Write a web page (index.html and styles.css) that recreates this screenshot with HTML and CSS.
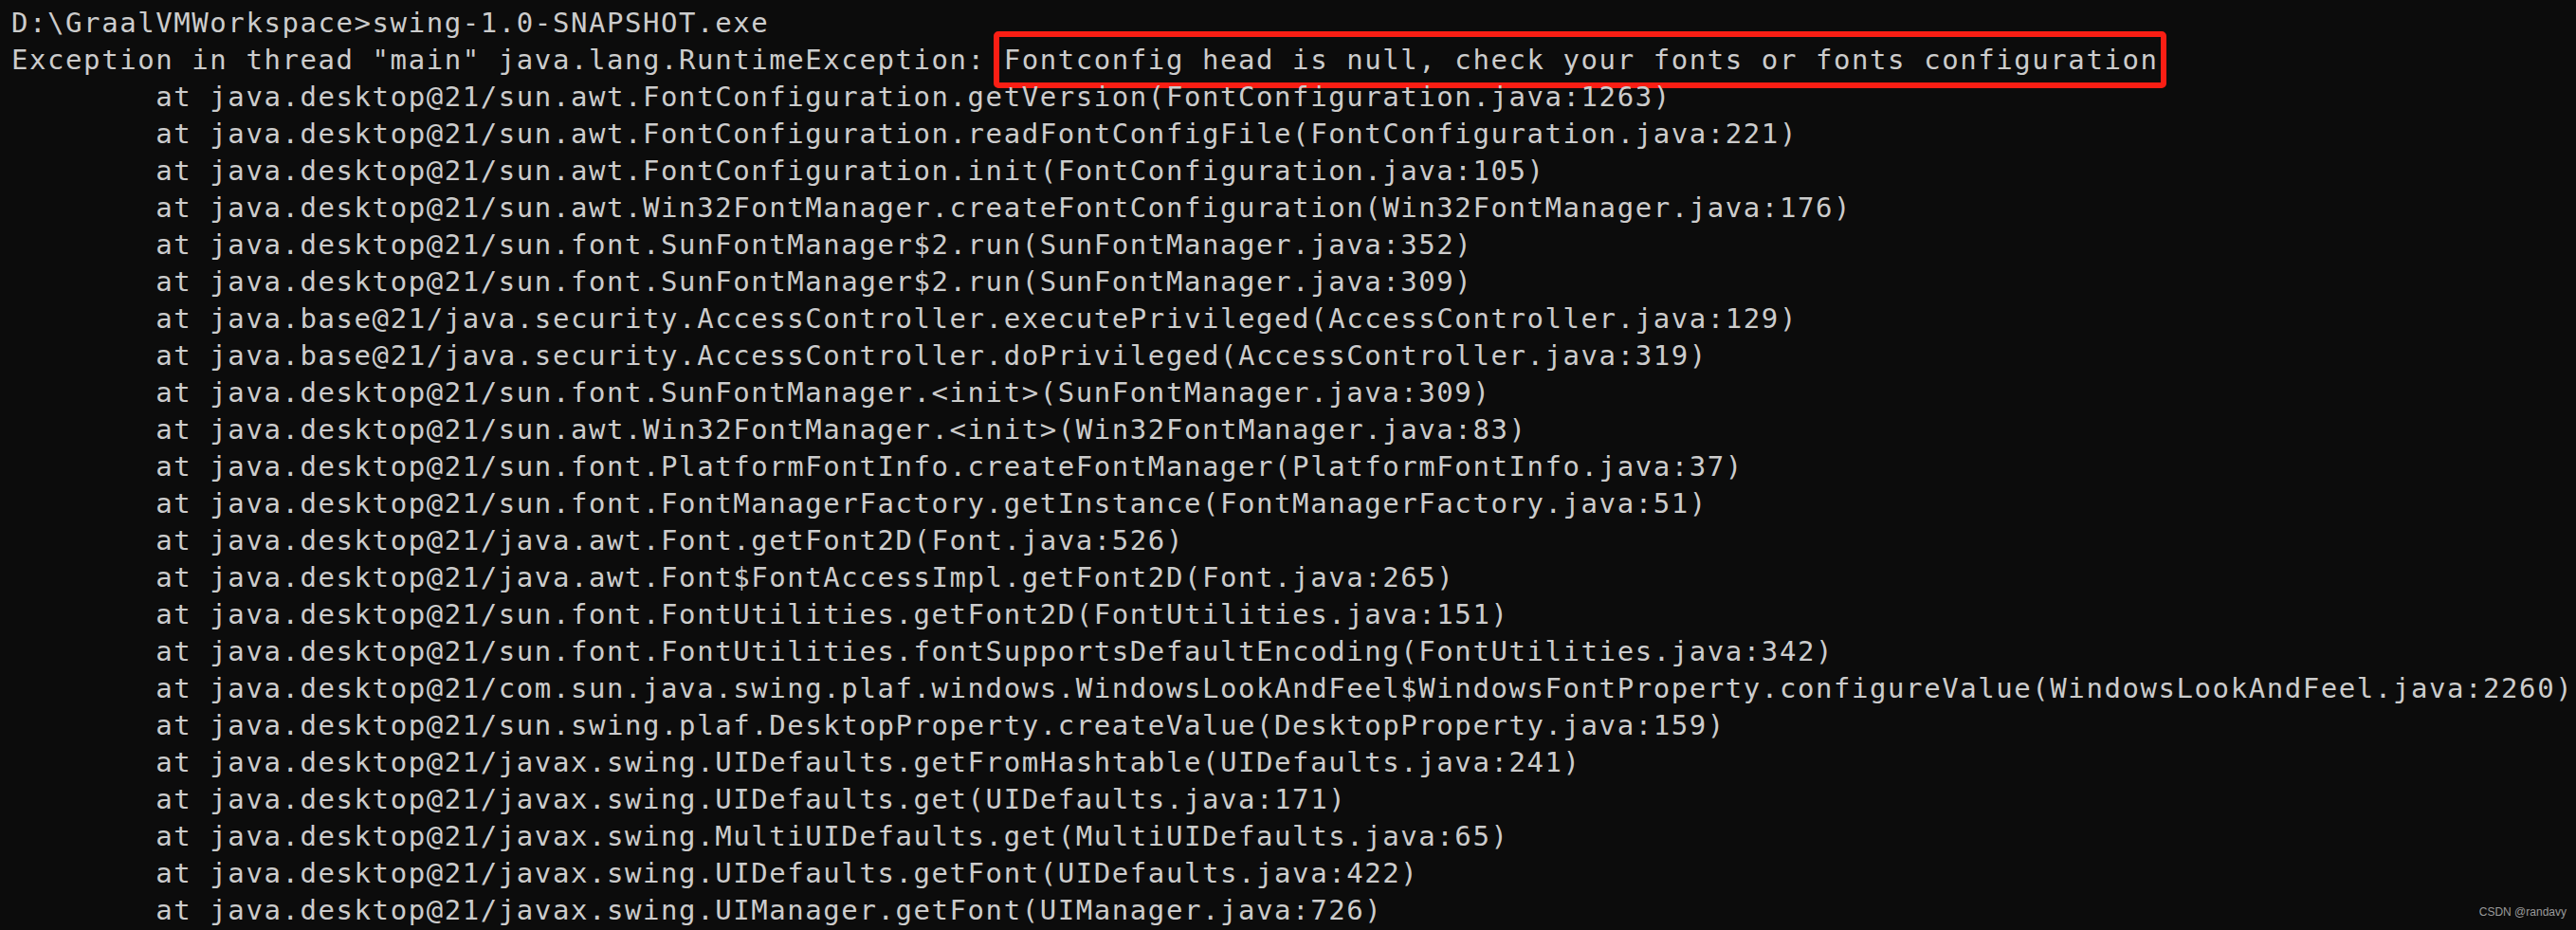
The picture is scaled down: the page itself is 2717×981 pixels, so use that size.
FILE: index.html
```html
<!DOCTYPE html>
<html lang="en">
<head>
  <meta charset="UTF-8" />
  <meta name="viewport" content="width=device-width, initial-scale=1.0" />
  <title>swing-1.0-SNAPSHOT.exe</title>
  <link rel="stylesheet" href="styles.css">
</head>
<body>
  <pre class="console">D:\GraalVMWorkspace&gt;swing-1.0-SNAPSHOT.exe
Exception in thread "main" java.lang.RuntimeException: <span class="mark">Fontconfig head is null, check your fonts or fonts configuration</span>
	at java.desktop@21/sun.awt.FontConfiguration.getVersion(FontConfiguration.java:1263)
	at java.desktop@21/sun.awt.FontConfiguration.readFontConfigFile(FontConfiguration.java:221)
	at java.desktop@21/sun.awt.FontConfiguration.init(FontConfiguration.java:105)
	at java.desktop@21/sun.awt.Win32FontManager.createFontConfiguration(Win32FontManager.java:176)
	at java.desktop@21/sun.font.SunFontManager$2.run(SunFontManager.java:352)
	at java.desktop@21/sun.font.SunFontManager$2.run(SunFontManager.java:309)
	at java.base@21/java.security.AccessController.executePrivileged(AccessController.java:129)
	at java.base@21/java.security.AccessController.doPrivileged(AccessController.java:319)
	at java.desktop@21/sun.font.SunFontManager.&lt;init&gt;(SunFontManager.java:309)
	at java.desktop@21/sun.awt.Win32FontManager.&lt;init&gt;(Win32FontManager.java:83)
	at java.desktop@21/sun.font.PlatformFontInfo.createFontManager(PlatformFontInfo.java:37)
	at java.desktop@21/sun.font.FontManagerFactory.getInstance(FontManagerFactory.java:51)
	at java.desktop@21/java.awt.Font.getFont2D(Font.java:526)
	at java.desktop@21/java.awt.Font$FontAccessImpl.getFont2D(Font.java:265)
	at java.desktop@21/sun.font.FontUtilities.getFont2D(FontUtilities.java:151)
	at java.desktop@21/sun.font.FontUtilities.fontSupportsDefaultEncoding(FontUtilities.java:342)
	at java.desktop@21/com.sun.java.swing.plaf.windows.WindowsLookAndFeel$WindowsFontProperty.configureValue(WindowsLookAndFeel.java:2260)
	at java.desktop@21/sun.swing.plaf.DesktopProperty.createValue(DesktopProperty.java:159)
	at java.desktop@21/javax.swing.UIDefaults.getFromHashtable(UIDefaults.java:241)
	at java.desktop@21/javax.swing.UIDefaults.get(UIDefaults.java:171)
	at java.desktop@21/javax.swing.MultiUIDefaults.get(MultiUIDefaults.java:65)
	at java.desktop@21/javax.swing.UIDefaults.getFont(UIDefaults.java:422)
	at java.desktop@21/javax.swing.UIManager.getFont(UIManager.java:726)</pre>

  <div class="watermark">CSDN @randavy</div>
</body>
</html>
```

FILE: styles.css
```css
html, body {
  margin: 0;
  height: 100%;
}
body {
  background: #0c0c0c;
  position: relative;
  overflow: hidden;
}
.console {
  display: inline-block;
  margin: 0;
  padding: 5px 0 0 12px;
  font-family: "DejaVu Sans Mono", monospace;
  font-size: 29px;
  letter-spacing: 1.57px;
  line-height: 39px;
  color: #cccccc;
  white-space: pre;
  tab-size: 8;
}
.mark {
  border: 6px solid #fa1e14;
  border-radius: 5px;
  padding: 7px 2px 7px 5px;
  margin: 0 -8px 0 -11px;
}
.watermark {
  position: absolute;
  right: 10px;
  bottom: 12px;
  font-family: "Liberation Sans", Arial, sans-serif;
  font-size: 12px;
  color: #9a9a9a;
}
```
